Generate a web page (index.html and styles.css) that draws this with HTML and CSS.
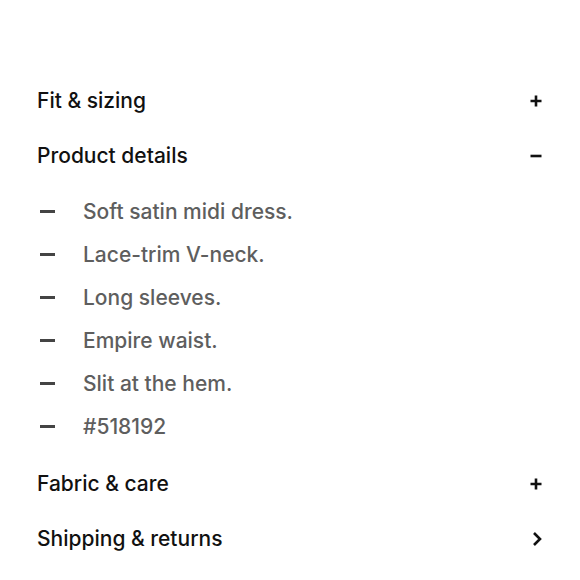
FILE: index.html
```html
<!DOCTYPE html>
<html lang="en">
<head>
<meta charset="utf-8">
<title>Product accordion</title>
<link rel="stylesheet" href="styles.css">
</head>
<body>
<div class="accordion">
  <div class="row">
    <span class="title">Fit &amp; sizing</span>
    <svg class="icon" viewBox="0 0 12 12"><path d="M6 0.5v11M0.5 6h11"/></svg>
  </div>
  <div class="row">
    <span class="title">Product details</span>
    <svg class="icon" viewBox="0 0 12 12"><path d="M0.5 6h11"/></svg>
  </div>
  <ul class="details">
    <li><span class="dash"></span><span>Soft satin midi dress.</span></li>
    <li><span class="dash"></span><span>Lace-trim V-neck.</span></li>
    <li><span class="dash"></span><span>Long sleeves.</span></li>
    <li><span class="dash"></span><span>Empire waist.</span></li>
    <li><span class="dash"></span><span>Slit at the hem.</span></li>
    <li><span class="dash"></span><span>#518192</span></li>
  </ul>
  <div class="row">
    <span class="title">Fabric &amp; care</span>
    <svg class="icon" viewBox="0 0 12 12"><path d="M6 0.5v11M0.5 6h11"/></svg>
  </div>
  <div class="row">
    <span class="title">Shipping &amp; returns</span>
    <svg class="chev" viewBox="0 0 10 16"><path d="M2 2l6 6-6 6"/></svg>
  </div>
</div>
</body>
</html>
```
FILE: styles.css
```css
html, body {
  margin: 0;
  padding: 0;
  background: #fff;
}
body {
  font-family: Inter, "Liberation Sans", sans-serif;
  color: #111;
}
.accordion {
  padding: 73px 37px 0 37px;
}
.row {
  height: 55px;
  display: flex;
  align-items: center;
  justify-content: space-between;
}
.title {
  font-size: 21px;
  font-weight: 450;
  color: #111;
}
.icon {
  width: 12px;
  height: 12px;
  margin-right: 1px;
  fill: none;
  stroke: #111;
  stroke-width: 2.6;
}
.chev {
  width: 10px;
  height: 16px;
  margin-right: 1px;
  fill: none;
  stroke: #111;
  stroke-width: 2.6;
}
.details {
  list-style: none;
  margin: 0;
  padding: 7px 0 8px;
}
.details li {
  height: 43px;
  display: flex;
  align-items: center;
  font-size: 21px;
  font-weight: 450;
  color: #5e5e5e;
}
.dash {
  width: 15px;
  height: 3px;
  background: #444;
  margin-left: 3px;
  margin-right: 28px;
}
```
